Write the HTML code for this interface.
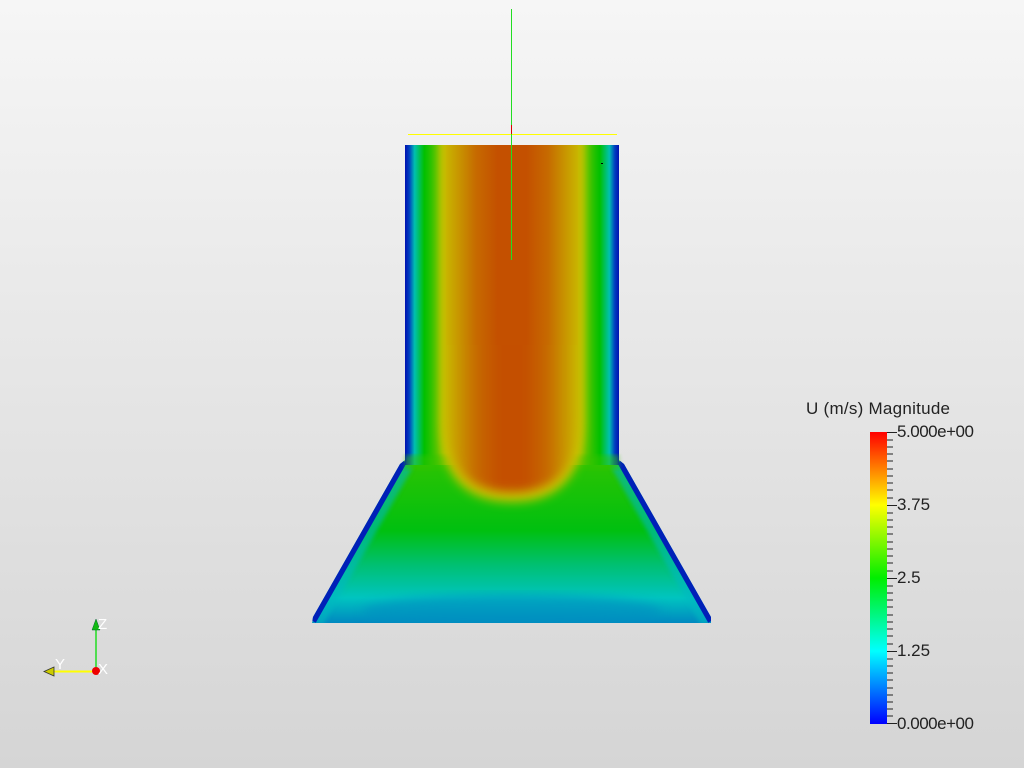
<!DOCTYPE html>
<html><head><meta charset="utf-8"><style>
html,body{margin:0;padding:0;width:1024px;height:768px;overflow:hidden;background:linear-gradient(#f6f6f6,#d5d5d5);font-family:"Liberation Sans","DejaVu Sans",sans-serif}
</style></head><body>
<svg width="1024" height="768" viewBox="0 0 1024 768" style="position:absolute;left:0;top:0">
<defs>
<linearGradient id="hx" x1="405" x2="619" y1="0" y2="0" gradientUnits="userSpaceOnUse">
<stop offset="0" stop-color="#0010b0"/><stop offset="0.02" stop-color="#0040c0"/><stop offset="0.045" stop-color="#00c0b0"/><stop offset="0.09" stop-color="#00c000"/>
<stop offset="0.15" stop-color="#50c400"/><stop offset="0.2" stop-color="#b0c800"/>
<stop offset="0.5" stop-color="#80c400"/>
<stop offset="0.8" stop-color="#b0c800"/><stop offset="0.85" stop-color="#50c400"/><stop offset="0.91" stop-color="#00c000"/><stop offset="0.955" stop-color="#00c0b0"/><stop offset="0.98" stop-color="#0040c0"/><stop offset="1" stop-color="#0010b0"/>
</linearGradient>
<linearGradient id="core" x1="440" x2="584" y1="0" y2="0" gradientUnits="userSpaceOnUse">
<stop offset="0" stop-color="#c8c400"/><stop offset="0.1" stop-color="#c8a000"/><stop offset="0.25" stop-color="#c66a00"/><stop offset="0.4" stop-color="#c45000"/>
<stop offset="0.6" stop-color="#c45000"/><stop offset="0.75" stop-color="#c66a00"/><stop offset="0.9" stop-color="#c8a000"/><stop offset="1" stop-color="#c8c400"/>
</linearGradient>
<linearGradient id="fl" x1="0" x2="0" y1="455" y2="623" gradientUnits="userSpaceOnUse">
<stop offset="0" stop-color="#30c400"/><stop offset="0.45" stop-color="#00c010"/><stop offset="0.65" stop-color="#00c070"/><stop offset="0.85" stop-color="#00c4c0"/><stop offset="1" stop-color="#0088c0"/>
</linearGradient>
<linearGradient id="cb" x1="0" x2="0" y1="432" y2="724" gradientUnits="userSpaceOnUse">
<stop offset="0" stop-color="#ff0000"/><stop offset="0.25" stop-color="#ffff00"/><stop offset="0.5" stop-color="#00ee00"/><stop offset="0.75" stop-color="#00ffff"/><stop offset="1" stop-color="#0000ff"/>
</linearGradient>
<clipPath id="fc"><path d="M405,440 L619,440 L619,460 L624,464 L711,617 L711,623 L312,623 L313,617 L400,464 L405,460 Z"/></clipPath>
<clipPath id="cc"><rect x="405" y="145" width="214" height="480"/></clipPath>
<filter id="bl" x="-20%" y="-10%" width="140%" height="120%"><feGaussianBlur stdDeviation="5"/></filter>
<filter id="bl2"><feGaussianBlur stdDeviation="2"/></filter>
</defs>
<g clip-path="url(#fc)">
<path d="M405,440 L619,440 L619,460 L624,464 L711,617 L711,623 L312,623 L313,617 L400,464 L405,460 Z" fill="url(#fl)"/>
<path d="M402,460 L311,620 M622,460 L713,620" stroke="#00b8c0" stroke-width="26" fill="none" opacity="0.6" filter="url(#bl2)"/>
<path d="M402,460 L311,620 M622,460 L713,620" stroke="#0020b8" stroke-width="11" fill="none"/>
<ellipse cx="512" cy="612" rx="150" ry="18" fill="#0090c0" opacity="0.6" filter="url(#bl)"/>
</g>
<rect x="405" y="145" width="214" height="320" fill="url(#hx)"/>
<path d="M405,455 L619,455 L619,470 L405,470 Z" fill="#30c400" opacity="0.5" filter="url(#bl2)"/>
<g clip-path="url(#cc)">
<path d="M440,100 H584 V420 C584,475 560,502 512,502 C464,502 440,475 440,420 Z" fill="#c8c400" filter="url(#bl)"/>
<path d="M446,100 H578 V420 C578,468 556,492 512,492 C468,492 446,468 446,420 Z" fill="url(#core)" filter="url(#bl)"/>
<rect x="446" y="145" width="132" height="200" fill="url(#core)"/>
</g>
<!-- lines -->
<line x1="408" y1="134.5" x2="617" y2="134.5" stroke="#ffff00" stroke-width="1"/>
<line x1="511.5" y1="9" x2="511.5" y2="260" stroke="#22dd22" stroke-width="1"/>
<line x1="511.5" y1="125" x2="511.5" y2="134" stroke="#dd0000" stroke-width="1"/>
<rect x="601" y="163" width="2" height="1" fill="#000"/>
<!-- colorbar -->
<rect x="870" y="432" width="17" height="292" fill="url(#cb)"/>
<g stroke="#222" stroke-width="1">
<line x1="887" y1="432.5" x2="897" y2="432.5"/><line x1="887" y1="505.5" x2="897" y2="505.5"/><line x1="887" y1="578.5" x2="897" y2="578.5"/><line x1="887" y1="651.5" x2="897" y2="651.5"/><line x1="887" y1="723.5" x2="897" y2="723.5"/>
</g>
<g stroke="#222" stroke-width="1">
<line x1="887" y1="440" x2="893" y2="440"/><line x1="887" y1="447" x2="893" y2="447"/><line x1="887" y1="454" x2="893" y2="454"/><line x1="887" y1="461" x2="893" y2="461"/><line x1="887" y1="469" x2="893" y2="469"/><line x1="887" y1="476" x2="893" y2="476"/><line x1="887" y1="483" x2="893" y2="483"/><line x1="887" y1="490" x2="893" y2="490"/><line x1="887" y1="498" x2="893" y2="498"/>
<line x1="887" y1="513" x2="893" y2="513"/><line x1="887" y1="520" x2="893" y2="520"/><line x1="887" y1="527" x2="893" y2="527"/><line x1="887" y1="534" x2="893" y2="534"/><line x1="887" y1="542" x2="893" y2="542"/><line x1="887" y1="549" x2="893" y2="549"/><line x1="887" y1="556" x2="893" y2="556"/><line x1="887" y1="563" x2="893" y2="563"/><line x1="887" y1="571" x2="893" y2="571"/>
<line x1="887" y1="586" x2="893" y2="586"/><line x1="887" y1="593" x2="893" y2="593"/><line x1="887" y1="600" x2="893" y2="600"/><line x1="887" y1="607" x2="893" y2="607"/><line x1="887" y1="615" x2="893" y2="615"/><line x1="887" y1="622" x2="893" y2="622"/><line x1="887" y1="629" x2="893" y2="629"/><line x1="887" y1="636" x2="893" y2="636"/><line x1="887" y1="644" x2="893" y2="644"/>
<line x1="887" y1="659" x2="893" y2="659"/><line x1="887" y1="666" x2="893" y2="666"/><line x1="887" y1="673" x2="893" y2="673"/><line x1="887" y1="680" x2="893" y2="680"/><line x1="887" y1="688" x2="893" y2="688"/><line x1="887" y1="695" x2="893" y2="695"/><line x1="887" y1="702" x2="893" y2="702"/><line x1="887" y1="709" x2="893" y2="709"/><line x1="887" y1="716" x2="893" y2="716"/>
</g>
<g font-size="17" fill="#222" font-family="Liberation Sans, sans-serif">
<text x="806" y="414" textLength="144">U (m/s) Magnitude</text>
<text x="897" y="437" textLength="77">5.000e+00</text>
<text x="897" y="510">3.75</text>
<text x="897" y="583">2.5</text>
<text x="897" y="656">1.25</text>
<text x="897" y="729" textLength="77">0.000e+00</text>
</g>
<!-- axes -->
<line x1="96" y1="628" x2="96" y2="671" stroke="#22dd22" stroke-width="1.5"/>
<line x1="52" y1="671.5" x2="96" y2="671.5" stroke="#ffff00" stroke-width="2"/>
<polygon points="92,630 96,619 100,630" fill="#11bb11" stroke="#063" stroke-width="0.5"/>
<polygon points="44,671.5 54,667 54,676" fill="#cccc00" stroke="#333" stroke-width="0.8"/>
<circle cx="96" cy="671" r="4" fill="#ee0000"/>
<g font-size="15" fill="#fff"><text x="98" y="629">Z</text><text x="55" y="669">Y</text><text x="98" y="674">X</text></g>
</svg>
</body></html>
